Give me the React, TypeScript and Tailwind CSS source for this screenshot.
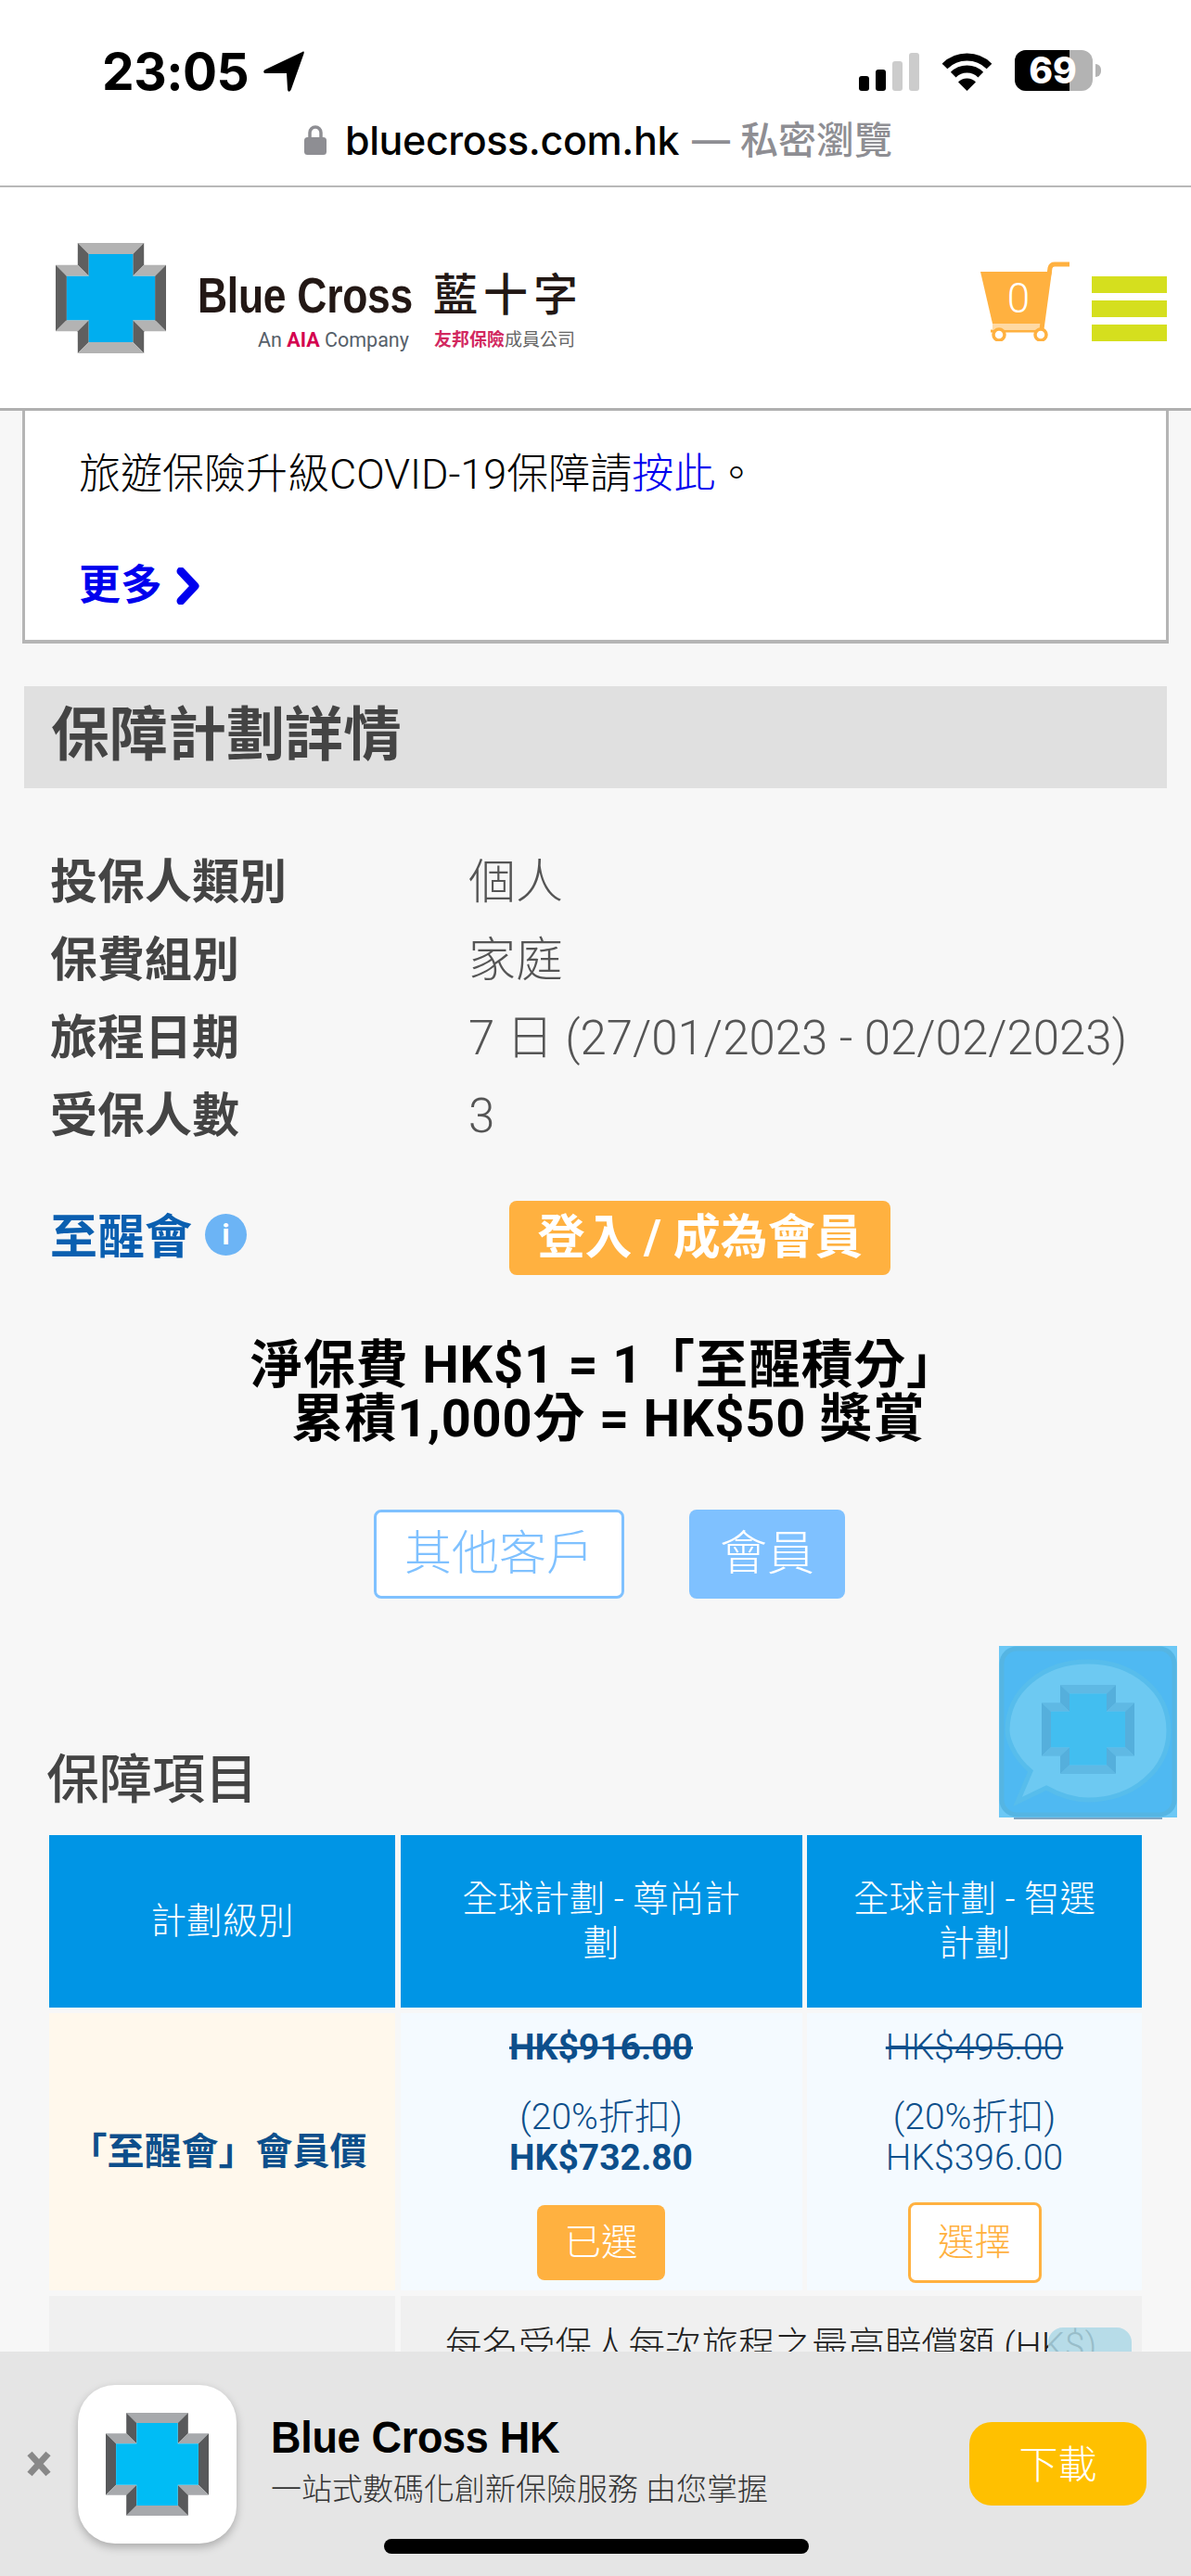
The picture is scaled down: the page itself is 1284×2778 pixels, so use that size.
import React from "react";

function CrossShapes({ blue, light, dark }: { blue: string; light: string; dark: string }) {
  return (
    <>
      <polygon fill={light} points="20,0 80,0 70,10 30,10" />
      <polygon fill={dark} points="20,0 30,10 30,30 20,20" />
      <polygon fill={dark} points="80,0 70,10 70,30 80,20" />
      <polygon fill={light} points="0,20 20,20 30,30 10,30" />
      <polygon fill={light} points="100,20 80,20 70,30 90,30" />
      <polygon fill={dark} points="0,20 10,30 10,70 0,80" />
      <polygon fill={dark} points="100,20 90,30 90,70 100,80" />
      <polygon fill={light} points="0,80 10,70 30,70 20,80" />
      <polygon fill={light} points="100,80 90,70 70,70 80,80" />
      <polygon fill={dark} points="20,80 30,70 30,90 20,100" />
      <polygon fill={dark} points="80,80 70,70 70,90 80,100" />
      <polygon fill={light} points="20,100 30,90 70,90 80,100" />
      <polygon fill={blue} points="30,10 70,10 70,30 90,30 90,70 70,70 70,90 30,90 30,70 10,70 10,30 30,30" />
    </>
  );
}

function Cross({ className, blue, light, dark }: { className: string; blue: string; light: string; dark: string }) {
  return (
    <svg viewBox="0 0 100 100" className={className}>
      <CrossShapes blue={blue} light={light} dark={dark} />
    </svg>
  );
}

function StatusBar() {
  return (
    <div className="flex h-[54px] items-start justify-between pl-[110px] pr-[97px] pt-[1px]">
      <div className="flex items-center">
        <span className="font-['Inter'] text-[55px] font-bold leading-[46px] tracking-[-0.5px] text-black">23:05</span>
        <svg viewBox="0 0 44 44" className="ml-[16px] h-[44px] w-[44px]">
          <path d="M42 1 C44 0 44 1 43.500 3 L30 41 C28.500 45 26 44 26 41 L25 24 L3 24 C-1 24 0 21 2 20 Z" fill="#000" />
        </svg>
      </div>
      <div className="flex items-end">
        <div className="flex h-[42px] items-end gap-[7px]">
          <div className="h-[16px] w-[11px] rounded-[3px] bg-black" />
          <div className="h-[23px] w-[11px] rounded-[3px] bg-black" />
          <div className="h-[32px] w-[11px] rounded-[3px] bg-[#cccccc]" />
          <div className="h-[41px] w-[11px] rounded-[3px] bg-[#cccccc]" />
        </div>
        <svg viewBox="0 0 57 42" className="ml-[23px] h-[42px] w-[57px]">
          <path d="M4.500 15.500 A34 34 0 0 1 52.500 15.500" fill="none" stroke="#000" strokeWidth="8" />
          <path d="M13.700 24.700 A21 21 0 0 1 43.300 24.700" fill="none" stroke="#000" strokeWidth="8" />
          <path d="M28.500 42 L19 32.500 A13.500 13.500 0 0 1 38 32.500 Z" fill="#000" />
        </svg>
        <div className="ml-[23px] flex items-center">
          <div className="relative flex h-[44px] w-[84px] rounded-[12px] bg-[#b3b3b3]">
            <div className="h-full w-[59px] rounded-l-[12px] bg-black" />
            <span className="absolute inset-0 pr-[2px] text-center font-['Inter'] text-[39px] font-extrabold leading-[44px] text-white">69</span>
          </div>
          <div className="ml-[3px] h-[14px] w-[6px] rounded-r-full bg-[#b3b3b3]" />
        </div>
      </div>
    </div>
  );
}

function UrlBar() {
  return (
    <div className="mt-[22px] flex h-[44px] items-center pl-[328px]">
      <svg viewBox="0 0 24 32" className="h-[32px] w-[24px]">
        <path d="M6 14 V8 A6 6 0 0 1 18 8 V14" fill="none" stroke="#8e8e93" strokeWidth="3.500" />
        <rect x="0" y="13" width="24" height="19" rx="3.500" fill="#8e8e93" />
      </svg>
      <span className="ml-[20px] font-['Inter'] text-[43px] font-medium leading-[44px] tracking-[-0.4px] text-black">bluecross.com.hk</span>
      <span className="ml-[14px] font-['Inter','Noto_Sans_CJK_TC'] text-[41px] font-medium leading-[44px] text-[#8e8e93]">— 私密瀏覽</span>
    </div>
  );
}

function Logo() {
  return (
    <div className="flex items-start">
      <Cross className="h-[119px] w-[119px]" blue="#00aeef" light="#b3b3b3" dark="#5f5f5f" />
      <div className="ml-[34px] mt-[32px] flex flex-col">
        <div className="flex items-center">
          <span className="inline-block w-[230px] origin-center scale-y-[1.22] whitespace-nowrap font-['Liberation_Sans'] text-[44.500px] font-bold leading-[50px] tracking-[-0.3px] text-[#231815]">Blue Cross</span>
          <span className="ml-[24px] w-[165px] whitespace-nowrap text-[48px] font-medium leading-[50px] tracking-[6px] text-[#231815]">藍十字</span>
        </div>
        <div className="ml-[65px] mt-[11px] flex items-center">
          <span className="w-[190px] whitespace-nowrap font-['Roboto'] text-[21.500px] leading-[24px] text-[#56606a]">
            An <b className="text-[#d4004f]">AIA</b> Company
          </span>
          <span className="whitespace-nowrap text-[19px] leading-[24px] text-[#666666]">
            <b className="text-[#d2285f]">友邦保險</b>成員公司
          </span>
        </div>
      </div>
    </div>
  );
}

function Cart() {
  return (
    <div className="relative h-[86px] w-[96px]">
      <svg viewBox="0 0 96 86" className="h-[86px] w-[96px]">
        <polygon points="0,11 77,11 65,67 13,67" fill="#ffb140" />
        <rect x="13" y="67" width="52" height="6" fill="#ffd9a3" />
        <path d="M66 73 L75 7 Q76 3 80 3 L96 3" fill="none" stroke="#ffb140" strokeWidth="5" />
        <path d="M11 75 H70" stroke="#ffb140" strokeWidth="3" />
        <circle cx="20" cy="79" r="6" fill="#fff" stroke="#ffb140" strokeWidth="3.500" />
        <circle cx="65" cy="79" r="6" fill="#fff" stroke="#ffb140" strokeWidth="3.500" />
      </svg>
      <span className="absolute left-[22px] top-[16px] w-[38px] text-center text-[44px] font-light leading-[48px] text-white">0</span>
    </div>
  );
}

function InfoRow({ label, value }: { label: string; value: string }) {
  return (
    <div className="flex h-[84px] items-center pl-[54px]">
      <span className="w-[451px] text-[51px] font-bold leading-[60px] text-[#444444]">{label}</span>
      <span className="whitespace-nowrap text-[51px] font-light leading-[60px] text-[#555555]">{value}</span>
    </div>
  );
}

function ChatBubble() {
  return (
    <svg viewBox="0 0 192 187" className="absolute left-[1077px] top-[1775px] h-[187px] w-[192px]">
      <rect x="16" y="184" width="160" height="3" fill="#7fa6c4" />
      <rect width="192" height="185" fill="#6cc8f5" />
      <rect x="3" y="3" width="186" height="179" rx="16" fill="#4fb9f2" stroke="#55b5e3" strokeWidth="5" />
      <path d="M34 135 C14 118 9 98 9 91 C9 48 48 17 96 17 C144 17 183 48 183 91 C183 134 144 166 96 166 C78 166 65 161 51 153 L20 168 Z" fill="#6dc9f2" stroke="#57bdec" strokeWidth="5" />
      <svg x="46" y="42" width="100" height="96" viewBox="0 0 100 100" preserveAspectRatio="none">
        <CrossShapes blue="#42bef0" light="#5fb9e4" dark="#55afdc" />
      </svg>
    </svg>
  );
}

function Table() {
  return (
    <div className="ml-[53px] grid w-[1178px] grid-cols-[373px_433px_361px] gap-x-[5.500px] gap-y-[6px]">
      <div className="flex h-[186px] items-center justify-center bg-[#0095e5] text-[38.500px] font-light leading-[48px] text-white">計劃級別</div>
      <div className="flex h-[186px] items-center justify-center bg-[#0095e5] px-[60px] text-center text-[38.500px] font-light leading-[48px] text-white">全球計劃 - 尊尚計劃</div>
      <div className="flex h-[186px] items-center justify-center bg-[#0095e5] px-[40px] text-center text-[38.500px] font-light leading-[48px] text-white">全球計劃 - 智選計劃</div>

      <div className="flex h-[299px] items-center justify-center whitespace-nowrap bg-[#fff8ec] pr-[8px] text-[40px] font-bold leading-[48px] text-[#0d4f8b]">「至醒會」會員價</div>
      <div className="flex h-[299px] flex-col items-center bg-[#f4faff] pt-[13px] text-[39px] leading-[48px] text-[#0d4f8b]">
        <span className="font-bold line-through">HK$916.00</span>
        <span className="mt-[27px] font-light">(20%折扣)</span>
        <span className="mt-[-4px] font-bold">HK$732.80</span>
        <div className="mt-[27px] flex h-[81px] w-[138px] items-center justify-center rounded-[8px] bg-[#ffb140] text-[39.500px] font-light text-white">已選</div>
      </div>
      <div className="flex h-[299px] flex-col items-center bg-[#f4faff] pt-[13px] text-[39px] font-light leading-[48px] text-[#0d4f8b]">
        <span className="line-through">HK$495.00</span>
        <span className="mt-[27px]">(20%折扣)</span>
        <span className="mt-[-4px]">HK$396.00</span>
        <div className="mt-[24px] flex h-[87px] w-[144px] items-center justify-center rounded-[8px] border-[3px] border-[#ffb140] bg-white text-[39.500px] text-[#ffb140]">選擇</div>
      </div>

      <div className="h-[200px] bg-[#f0f0f0]" />
      <div className="col-span-2 h-[200px] whitespace-nowrap bg-[#f0f0f0] pt-[30px] text-center text-[39.500px] font-light leading-[48px] text-[#222222]">每名受保人每次旅程之最高賠償額 (HK$)</div>
    </div>
  );
}

function Banner() {
  return (
    <div className="absolute bottom-0 left-0 flex h-[242px] w-[1284px] items-center bg-[#e5e5e5] pl-[28px]">
      <svg viewBox="0 0 28 30" className="h-[30px] w-[28px]">
        <path d="M4 4 L24 26 M24 4 L4 26" stroke="#888888" strokeWidth="7" />
      </svg>
      <div className="ml-[28px] flex h-[171px] w-[171px] items-center justify-center rounded-[40px] bg-white shadow-[0_4px_10px_rgba(0,0,0,0.25)]">
        <Cross className="h-[111px] w-[111px]" blue="#00bcf5" light="#a7a9ac" dark="#58595b" />
      </div>
      <div className="ml-[37px] flex w-[753px] flex-col items-start">
        <span className="origin-left scale-y-[1.08] font-['Liberation_Sans'] text-[45px] font-bold leading-[54px] tracking-[-0.3px] text-black">Blue Cross HK</span>
        <span className="whitespace-nowrap pt-[2px] text-[33px] font-light leading-[54px] text-[#333333]">一站式數碼化創新保險服務 由您掌握</span>
      </div>
      <div className="flex h-[90px] w-[191px] items-center justify-center rounded-[24px] bg-[#ffc000] pt-[3px] text-[42px] font-light text-white">下載</div>
      <div className="absolute left-[414px] top-[202px] h-[16px] w-[458px] rounded-full bg-black" />
    </div>
  );
}

export default function App() {
  return (
    <div className="relative h-[2778px] w-[1284px] overflow-hidden bg-[#f7f7f7] font-['Roboto','Noto_Sans_CJK_TC',sans-serif]">
      <div className="h-[202px] border-b-2 border-[#b8b8b8] bg-white pt-[53px]">
        <StatusBar />
        <UrlBar />
      </div>

      <div className="flex h-[241px] items-center justify-between border-b-[3px] border-[#b0b0b0] bg-white pl-[60px] pr-[26px]">
        <Logo />
        <div className="mt-[8px] flex items-end">
          <Cart />
          <div className="ml-[24px] flex w-[81px] flex-col gap-[8px]">
            <div className="h-[18px] bg-[#d5df1e]" />
            <div className="h-[18px] bg-[#d5df1e]" />
            <div className="h-[18px] bg-[#d5df1e]" />
          </div>
        </div>
      </div>

      <div className="ml-[24px] h-[251px] w-[1236px] border-x-[3px] border-b-[4px] border-[#b5b5b5] bg-white pl-[58px] pt-[41px]">
        <p className="text-[45px] font-light leading-[56px] text-black">
          旅遊保險升級COVID-19保障請<span className="text-[#0000ee]">按此</span>。
        </p>
        <div className="mt-[64px] flex items-center">
          <span className="text-[45px] font-bold leading-[56px] text-[#0000ee]">更多</span>
          <svg viewBox="0 0 26 40" className="ml-[15px] h-[40px] w-[26px]">
            <path d="M5 4 L20 20 L5 36" fill="none" stroke="#0000ee" strokeWidth="9" strokeLinejoin="round" strokeLinecap="round" />
          </svg>
        </div>
      </div>

      <div className="mx-[26px] mt-[46px] flex h-[110px] items-center bg-[#e0e0e0] pb-[5px] pl-[29px]">
        <span className="text-[63px] font-bold leading-[70px] text-[#444444]">保障計劃詳情</span>
      </div>

      <div className="mt-[60px]">
        <InfoRow label="投保人類別" value="個人" />
        <InfoRow label="保費組別" value="家庭" />
        <InfoRow label="旅程日期" value="7 日 (27/01/2023 - 02/02/2023)" />
        <InfoRow label="受保人數" value="3" />
      </div>

      <div className="mt-[49px] flex h-[80px] items-center pl-[54px]">
        <span className="text-[51px] font-bold leading-[60px] text-[#0a5fb0]">至醒會</span>
        <div className="mb-[8px] ml-[14px] flex h-[45px] w-[45px] items-center justify-center rounded-full bg-[#6cb4f5] text-[32px] font-bold text-white">i</div>
        <div className="ml-[283px] flex h-[80px] w-[411px] items-center justify-center rounded-[8px] bg-[#ffb140] text-[51px] font-bold text-white">登入 / 成為會員</div>
      </div>

      <div className="mt-[68px] text-center text-[56px] font-bold leading-[58px] tracking-[0.8px] text-black">
        <div className="pl-[20px]">淨保費 HK$1 = 1「至醒積分」</div>
        <div className="pl-[28px]">累積1,000分 = HK$50 獎賞</div>
      </div>

      <div className="ml-[403px] mt-[69px] flex gap-[70px]">
        <div className="flex h-[96px] w-[270px] items-center justify-center rounded-[8px] border-[3px] border-[#7fc1ff] bg-white text-[51px] font-light text-[#7fc1ff]">其他客戶</div>
        <div className="flex h-[96px] w-[168px] items-center justify-center rounded-[8px] bg-[#7fc1ff] text-[51px] font-light text-white">會員</div>
      </div>

      <div className="ml-[50px] mt-[166px] text-[57px] font-medium leading-[60px] text-[#444444]">保障項目</div>
      <div className="mt-[29px]">
        <Table />
      </div>

      <ChatBubble />
      <div className="absolute left-[1130px] top-[2510px] h-[40px] w-[90px] rounded-t-[16px] bg-[#add8e6]/85" />
      <Banner />
    </div>
  );
}
